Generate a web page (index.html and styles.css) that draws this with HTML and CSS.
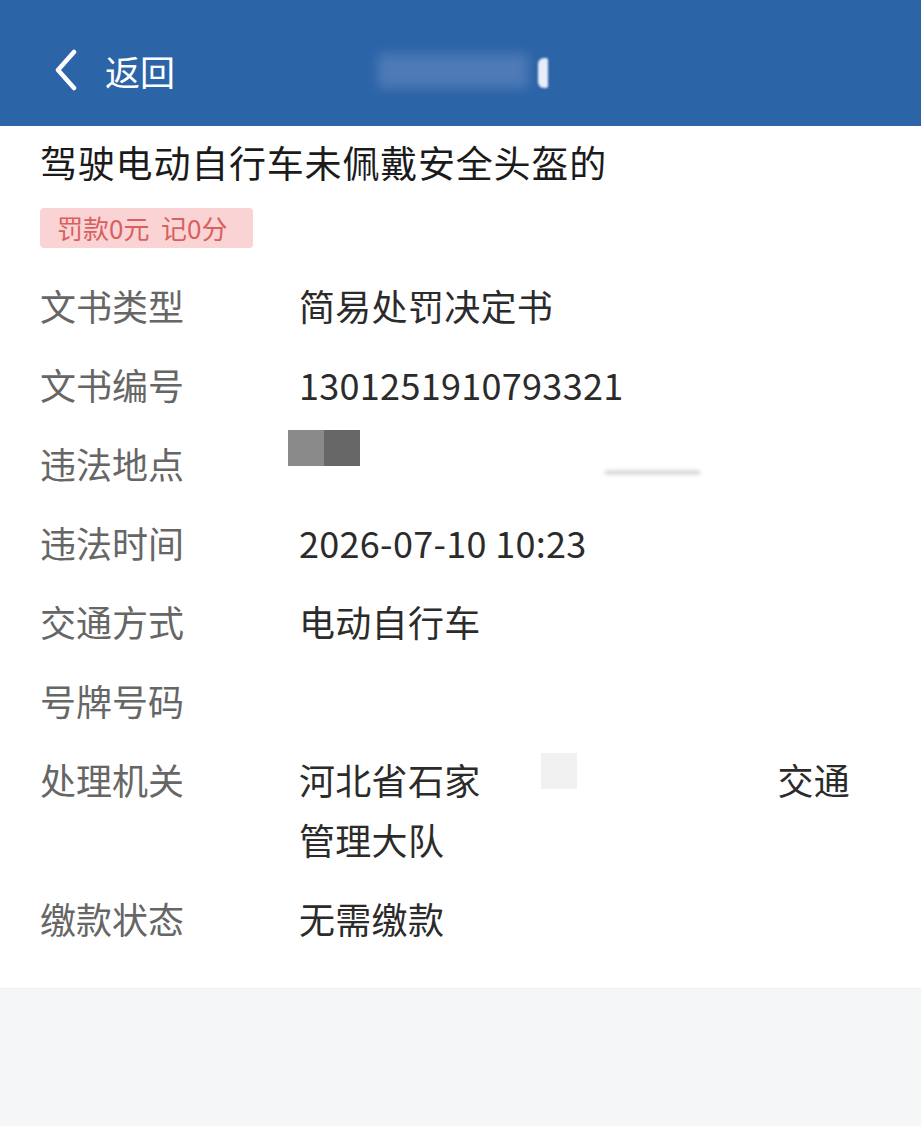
FILE: index.html
```html
<!DOCTYPE html>
<html lang="zh-CN">

<head>
    <meta charset="UTF-8">
    <meta name="viewport" content="width=device-width, initial-scale=1.0">
    <title>违法详情</title>
    <link rel="stylesheet" href="styles.css">
</head>

<body>
    <header class="nav-bar">
        <div class="nav-back">
            <svg class="back-icon" viewBox="0 0 26 42" width="26" height="42">
                <path d="M21 3 L5 21 L21 39" fill="none" stroke="#fff" stroke-width="4.5" stroke-linecap="round" stroke-linejoin="round"/>
            </svg>
            <span class="back-text">返回</span>
        </div>
        <div class="nav-title">
            <span class="title-smudge"></span>
            <span class="title-mark"></span>
        </div>
    </header>

    <main class="detail-card">
        <h1 class="violation-title">驾驶电动自行车未佩戴安全头盔的</h1>
        <span class="penalty-tag">罚款0元&nbsp;&nbsp;记0分</span>

        <div class="info-row">
            <div class="info-label">文书类型</div>
            <div class="info-value">简易处罚决定书</div>
        </div>
        <div class="info-row">
            <div class="info-label">文书编号</div>
            <div class="info-value">1301251910793321</div>
        </div>
        <div class="info-row">
            <div class="info-label">违法地点</div>
            <div class="info-value place-value">
                <span class="mask-dark"></span>
                <span class="mask-fade"></span>
            </div>
        </div>
        <div class="info-row">
            <div class="info-label">违法时间</div>
            <div class="info-value">2026-07-10 10:23</div>
        </div>
        <div class="info-row">
            <div class="info-label">交通方式</div>
            <div class="info-value">电动自行车</div>
        </div>
        <div class="info-row">
            <div class="info-label">号牌号码</div>
            <div class="info-value"></div>
        </div>
        <div class="info-row">
            <div class="info-label">处理机关</div>
            <div class="info-value">河北省石家<span class="mask-gap"><span class="mask-light"></span></span>交通<br>管理大队</div>
        </div>
        <div class="info-row">
            <div class="info-label">缴款状态</div>
            <div class="info-value">无需缴款</div>
        </div>
    </main>
</body>

</html>
```

FILE: styles.css
```css
body {
    margin: 0;
    font-family: "Noto Sans CJK SC", "Noto Sans", sans-serif;
    background: #f4f6f7;
    min-height: 1126px;
}

.nav-bar {
    height: 126px;
    background: #2c64a8;
    display: flex;
    align-items: center;
    position: relative;
}

.nav-back {
    display: flex;
    align-items: center;
    padding-left: 53px;
    padding-top: 14px;
}

.back-icon {
    display: block;
}

.back-text {
    margin-left: 26px;
    font-size: 35px;
    color: #fff;
    line-height: 1;
}

.nav-title {
    position: absolute;
    left: 378px;
    top: 50px;
    width: 172px;
    height: 44px;
}

.title-smudge {
    position: absolute;
    left: 0;
    top: 4px;
    width: 150px;
    height: 34px;
    background: rgba(120, 150, 200, 0.45);
    filter: blur(6px);
}

.title-mark {
    position: absolute;
    right: 2px;
    top: 8px;
    width: 10px;
    height: 30px;
    background: #e8eef7;
    border-radius: 6px 2px 2px 6px;
    filter: blur(1px);
}

.detail-card {
    background: #fff;
    padding: 10px 40px 31px;
    border-bottom: 1px solid #eceeef;
}

.violation-title {
    margin: 0;
    font-size: 37px;
    font-weight: normal;
    line-height: 52px;
    color: #1b1b1b;
    letter-spacing: 0.8px;
}

.penalty-tag {
    display: inline-block;
    margin-top: 20px;
    margin-bottom: 17px;
    height: 40px;
    line-height: 40px;
    padding: 0 17px;
    width: 179px;
    background: #fad4d4;
    color: #d9605e;
    font-size: 26px;
    border-radius: 4px;
    white-space: nowrap;
}

.info-row {
    display: flex;
    padding: 10px 0 9px;
    font-size: 36px;
    line-height: 60px;
}

.info-label {
    width: 259px;
    flex-shrink: 0;
    color: #666;
}

.info-value {
    color: #2b2b2b;
    min-height: 60px;
    letter-spacing: 0.3px;
}

.place-value {
    position: relative;
    flex: 1;
}

.mask-dark {
    position: absolute;
    left: -11px;
    top: -3px;
    width: 72px;
    height: 36px;
    background: linear-gradient(90deg, #8a8a8a 50%, #676767 50%);
}

.mask-fade {
    position: absolute;
    left: 306px;
    top: 38px;
    width: 95px;
    height: 6px;
    border-top: 3px solid #9a9a9a;
    filter: blur(2px);
    opacity: 0.6;
}

.mask-gap {
    display: inline-block;
    position: relative;
    width: 297px;
    height: 40px;
    vertical-align: middle;
}

.mask-light {
    position: absolute;
    left: 60px;
    top: -12px;
    width: 36px;
    height: 36px;
    background: #f1f1f1;
}
```
